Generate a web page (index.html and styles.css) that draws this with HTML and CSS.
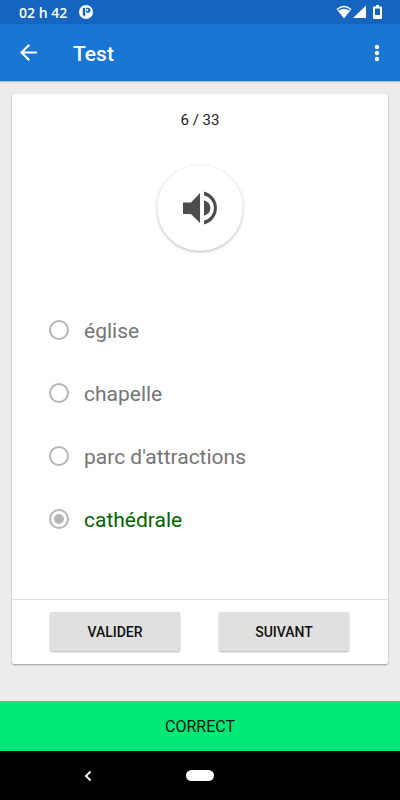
FILE: index.html
```html
<!DOCTYPE html>
<html lang="fr">
	<head>
		<meta charset="utf-8">
		<meta name="viewport" content="width=device-width, initial-scale=1">
		<title>Test</title>
		<link rel="stylesheet" href="styles.css">
	</head>
	<body>
		<div class="status-bar">
			<span class="clock">02 h 42</span>
			<svg class="notification" viewBox="0 0 14 14" width="14" height="14" aria-hidden="true">
				<circle cx="7" cy="7" r="7" fill="#fff"/>
				<path d="M3.800 3h2.400v8.500L3.800 10zM7.200 2.800h1.800a2.500 2.500 0 0 1 0 5H7.200z" fill="#1565c0"/>
				<circle cx="8.300" cy="5" r="0.900" fill="#fff"/>
			</svg>
			<div class="status-icons">
				<svg viewBox="0 0 16 14" width="16" height="14" aria-hidden="true">
					<path d="M0.500 4Q8-2.500 15.500 4L8 13.500z" fill="#fff"/>
					<path d="M2.500 5Q8 1 13.500 5" fill="none" stroke="#1565c0" stroke-width="1.500"/>
				</svg>
				<svg viewBox="0 0 13 14" width="13" height="14" aria-hidden="true">
					<path d="M13 0.500v12.500H0z" fill="#fff"/>
				</svg>
				<svg class="battery" viewBox="0 0 9 14" width="9" height="14" aria-hidden="true">
					<path d="M3 0h3v1.500h2a1 1 0 0 1 1 1V13a1 1 0 0 1-1 1H1a1 1 0 0 1-1-1V2.500a1 1 0 0 1 1-1h2zM2 3.500V10h5V3.500z" fill="#fff" fill-rule="evenodd"/>
				</svg>
			</div>
		</div>

		<header class="app-bar">
			<button class="icon-button" type="button" aria-label="Retour">
				<svg viewBox="4 4 16 16" width="17" height="17"><path d="M20 11H7.830l5.590-5.590L12 4l-8 8 8 8 1.410-1.410L7.830 13H20v-2z" fill="#fff"/></svg>
			</button>
			<h1>Test</h1>
			<button class="icon-button" type="button" aria-label="Plus d'options">
				<svg viewBox="0 0 6 18" width="6" height="18" fill="#fff"><circle cx="3" cy="3" r="2.200"/><circle cx="3" cy="9" r="2.200"/><circle cx="3" cy="15" r="2.200"/></svg>
			</button>
		</header>

		<main>
			<form class="card">
				<p class="counter">6 / 33</p>
				<button class="speaker" type="button" aria-label="Écouter">
					<svg viewBox="0 0 34 34" width="34" height="34" fill="#4d4d4d">
						<path d="M0 11.500h8L17 2v30l-9-9H0z"/>
						<path d="M21 9.500a7.600 7.600 0 0 1 0 15z"/>
						<path d="M21 0.500a17 17 0 0 1 0 33v-3.700a13.200 13.200 0 0 0 0-25.600z"/>
					</svg>
				</button>
				<div class="options">
					<label class="option"><input type="radio" name="answer"><span>église</span></label>
					<label class="option"><input type="radio" name="answer"><span>chapelle</span></label>
					<label class="option"><input type="radio" name="answer"><span>parc d'attractions</span></label>
					<label class="option correct"><input type="radio" name="answer" checked><span>cathédrale</span></label>
				</div>
				<div class="actions">
					<button type="button">VALIDER</button>
					<button type="button">SUIVANT</button>
				</div>
			</form>
		</main>

		<div class="result" role="status">CORRECT</div>

		<nav class="nav-bar">
			<button class="back" type="button" aria-label="Précédent">
				<svg viewBox="0 0 8 12" width="8" height="12"><path d="M6.500 1.500L2 6l4.500 4.500" fill="none" stroke="#fff" stroke-width="1.800"/></svg>
			</button>
			<button class="home" type="button" aria-label="Accueil"></button>
		</nav>
	</body>
</html>
```
FILE: styles.css
```css
*
{
	box-sizing: border-box;
}

body
{
	margin: 0;
	min-height: 100vh;
	display: flex;
	flex-direction: column;
	background: #ececec;
	color: #1a1a1a;
	font-family: Roboto, sans-serif;
}

button
{
	border: none;
	padding: 0;
	background: transparent;
	font-family: inherit;
	cursor: pointer;
}

svg
{
	display: block;
}

.status-bar
{
	display: flex;
	align-items: center;
	height: 24px;
	padding: 0 18px 0 19px;
	background: #1565c0;
	color: #fff;
}

.clock
{
	font-family: "Open Sans", sans-serif;
	font-size: 14px;
	font-weight: 600;
	line-height: 24px;
	padding-top: 2px;
}

.notification
{
	margin-left: 12px;
}

.status-icons
{
	display: flex;
	align-items: center;
	gap: 1px;
	margin-left: auto;
}

.battery
{
	margin-left: 6px;
}

.app-bar
{
	display: flex;
	align-items: center;
	height: 57px;
	padding: 0 20px;
	background: #1976d2;
	color: #fff;
	box-shadow: 0 1px 1px rgba(0, 0, 0, 0.2);
}

.app-bar h1
{
	flex: 1;
	margin: 0 0 0 36px;
	padding-top: 2px;
	font-size: 21px;
	font-weight: 500;
}

main
{
	flex: 1;
	display: flex;
	padding: 13px 12px 37px;
}

.card
{
	flex: 1;
	display: flex;
	flex-direction: column;
	background: #fff;
	border-radius: 2px;
	box-shadow: 0 1px 2px rgba(0, 0, 0, 0.35);
}

.counter
{
	margin: 0;
	padding-top: 16px;
	font-size: 15px;
	line-height: 20px;
	text-align: center;
}

.speaker
{
	display: flex;
	align-items: center;
	justify-content: center;
	align-self: center;
	width: 86px;
	height: 86px;
	margin: 35px 0 47px;
	border-radius: 50%;
	background: #fff;
	box-shadow: 0 1px 3px rgba(0, 0, 0, 0.3);
}

.options
{
	flex: 1;
	padding: 0 37px;
}

.option
{
	display: flex;
	align-items: center;
	gap: 15px;
	height: 63px;
	font-size: 21px;
	color: #757575;
}

.option span
{
	padding-top: 2px;
}

.option.correct
{
	color: #006400;
}

.option input
{
	appearance: none;
	display: grid;
	place-items: center;
	width: 20px;
	height: 20px;
	margin: 0;
	border: 2px solid #b5b5b5;
	border-radius: 50%;
}

.option input:checked::before
{
	content: "";
	width: 10px;
	height: 10px;
	border-radius: 50%;
	background: #b5b5b5;
}

.actions
{
	display: flex;
	gap: 39px;
	padding: 12px 39px 13px 38px;
	border-top: 1px solid #dedede;
}

.actions button
{
	flex: 1;
	height: 39px;
	border-radius: 2px;
	background: #e0e0e0;
	box-shadow: 0 1px 2px rgba(0, 0, 0, 0.3);
	color: #111;
	font-size: 14px;
	font-weight: 500;
}

.result
{
	padding-top: 2px;
	background: #00e976;
	color: #111;
	font-size: 16px;
	line-height: 48px;
	text-align: center;
}

.nav-bar
{
	display: grid;
	grid-template-columns: 1fr 28px 1fr;
	align-items: center;
	justify-items: center;
	height: 49px;
	background: #000;
}

.nav-bar .back
{
	margin-right: 10px;
}

.nav-bar .home
{
	width: 28px;
	height: 11px;
	border-radius: 6px;
	background: #fff;
}
```
